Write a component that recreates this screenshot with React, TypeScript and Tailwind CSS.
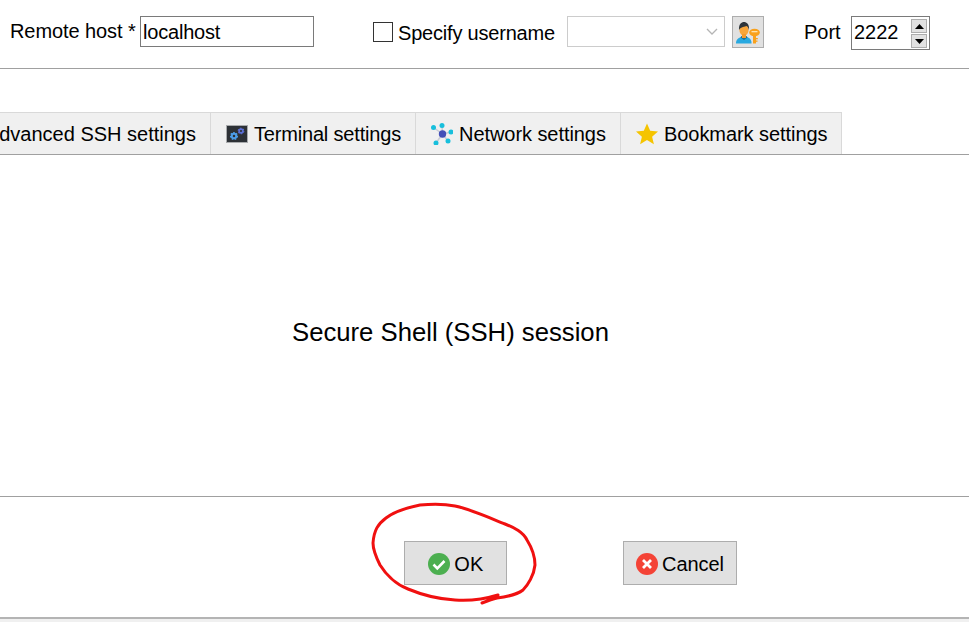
import React from "react";

function UserKey() {
  return (
    <svg width="24" height="22" viewBox="0 0 24 22" className="mt-[1px]">
      <path d="M0 21.500c0-4 2-5.500 5-6.500l3-1 3 1c3 1 4.500 2.500 4.500 6.500z" fill="#29a9e0" />
      <path d="M4.500 15.500L8 18l3.500-2.500-1-1.500h-5z" fill="#1c6f96" />
      <ellipse cx="8" cy="8" rx="4.600" ry="5.800" fill="#f9a63a" />
      <rect x="6" y="12" width="4" height="4" fill="#f49a2c" />
      <path d="M3 8C2.500 2 5.500 0 8 0s5.500 2 5 8c-.5-2.500-1.500-3.500-2.500-4C9 4.800 5 4.500 3 8z" fill="#2e353b" />
      <ellipse cx="18.500" cy="10.500" rx="5.300" ry="3.800" fill="#f9a11b" />
      <rect x="15.500" y="9" width="6" height="1.300" fill="#ffe3ad" />
      <rect x="17" y="13" width="3" height="8.500" fill="#f9a11b" />
      <rect x="20" y="16" width="1.800" height="1.300" fill="#f9a11b" />
      <rect x="20" y="18.500" width="1.500" height="1.300" fill="#f9a11b" />
    </svg>
  );
}

function Gear({ cx, cy, r, color }: { cx: number; cy: number; r: number; color: string }) {
  return (
    <g>
      <circle cx={cx} cy={cy} r={r} fill="none" stroke={color} strokeWidth={r * 0.9} />
      <circle cx={cx} cy={cy} r={r * 1.5} fill="none" stroke={color} strokeWidth={r * 0.55} strokeDasharray="1.600 1.400" />
    </g>
  );
}

function TerminalIcon() {
  return (
    <svg width="22" height="18" viewBox="0 0 22 18" className="shrink-0">
      <rect x="0.500" y="0.500" width="21" height="17" fill="#2d3136" stroke="#a9abad" />
      <Gear cx={8} cy={11} r={2.300} color="#4d9de8" />
      <Gear cx={15} cy={6} r={1.900} color="#5b6fd6" />
    </svg>
  );
}

function NetworkIcon() {
  const nodes = [
    [2.500, 4.500],
    [11, 2.500],
    [20, 9],
    [5, 20],
    [17, 18],
  ];
  return (
    <svg width="22" height="22" viewBox="0 0 22 22" className="shrink-0">
      {nodes.map(([x, y], i) => (
        <line key={i} x1={11.500} y1={11} x2={x} y2={y} stroke="#c9ccd6" strokeWidth="1.500" />
      ))}
      {nodes.map(([x, y], i) => (
        <circle key={i} cx={x} cy={y} r="2.500" fill="#18bfdc" />
      ))}
      <circle cx="11.500" cy="11" r="3.700" fill="#4350b8" />
    </svg>
  );
}

function StarIcon() {
  return (
    <svg width="22" height="22" viewBox="0 0 22 22" className="shrink-0">
      <path d="M11 0.500l3.200 7.300 7.800.7-5.900 5.200 1.800 7.600L11 17.100l-6.900 4.200 1.800-7.600L0 8.500l7.800-.7z" fill="#f5c400" />
    </svg>
  );
}

function Tab({ children, className = "" }: { children: React.ReactNode; className?: string }) {
  return (
    <div className={`flex h-[42px] items-center gap-[6px] border-r border-t border-[#d9d9d9] bg-[#f0f0f0] ${className}`}>
      {children}
    </div>
  );
}

function Spin({ up }: { up?: boolean }) {
  return (
    <div className="flex h-[14px] w-[16px] items-center justify-center border border-[#adadad] bg-[#e1e1e1]">
      <svg width="9" height="5" viewBox="0 0 9 5">
        <path d={up ? "M4.500 0L9 5H0z" : "M0 0h9L4.500 5z"} fill="#000" />
      </svg>
    </div>
  );
}

export default function App() {
  return (
    <div className="relative flex h-[622px] w-[969px] flex-col overflow-hidden bg-white font-['Liberation_Sans',Arial,sans-serif] text-[20px] leading-[24px] text-black">
      <div className="flex h-[69px] shrink-0 items-start border-b border-[#a0a0a0] pl-[10px] pt-[16px]">
        <span className="mt-[3px] w-[130px] shrink-0 tracking-[-0.08px]">Remote host *</span>
        <div className="flex h-[31px] w-[174px] shrink-0 items-center border border-[#7a7a7a] pl-[2px] tracking-[-0.2px]">localhost</div>
        <div className="ml-[59px] mt-[6px] h-[20px] w-[20px] shrink-0 border border-[#333333] bg-white" />
        <span className="ml-[5px] mt-[5px] w-[169px] shrink-0 tracking-[-0.2px]">Specify username</span>
        <div className="flex h-[31px] w-[158px] shrink-0 items-center justify-end border border-[#cccccc] pr-[6px]">
          <svg width="12" height="8" viewBox="0 0 12 8">
            <path d="M1 1l5 5 5-5" fill="none" stroke="#b5b5b5" strokeWidth="1.300" />
          </svg>
        </div>
        <div className="ml-[7px] flex h-[32px] w-[32px] shrink-0 items-center justify-center border border-[#adadad] bg-[#e1e1e1]">
          <UserKey />
        </div>
        <span className="ml-[40px] mt-[4px] w-[47px] shrink-0">Port</span>
        <div className="flex h-[34px] w-[79px] shrink-0 items-center justify-between border border-[#7a7a7a] pl-[2px] pr-[2px] pb-[2px]">
          <span>2222</span>
          <div className="mt-[2px] flex flex-col gap-[1px] self-start">
            <Spin up />
            <Spin />
          </div>
        </div>
      </div>

      <div className="mt-[43px] flex h-[43px] shrink-0 items-stretch border-b border-[#a0a0a0]">
        <Tab className="w-[211px] justify-end pr-[14px]">
          <span className="whitespace-nowrap">Advanced SSH settings</span>
        </Tab>
        <Tab className="w-[205px] pl-[15px]">
          <TerminalIcon />
          <span className="whitespace-nowrap tracking-[-0.18px]">Terminal settings</span>
        </Tab>
        <Tab className="w-[205px] pl-[15px]">
          <NetworkIcon />
          <span className="whitespace-nowrap tracking-[-0.06px]">Network settings</span>
        </Tab>
        <Tab className="w-[221px] pl-[15px]">
          <StarIcon />
          <span className="whitespace-nowrap tracking-[-0.06px]">Bookmark settings</span>
        </Tab>
      </div>

      <div className="flex h-[342px] shrink-0 items-center justify-start border-b border-[#a0a0a0] pl-[292px] pt-[12px]">
        <span className="text-[25.7px] leading-[28px]">Secure Shell (SSH) session</span>
      </div>

      <div className="flex h-[120px] shrink-0 items-start pl-[404px] pt-[44px]">
        <button className="flex h-[44px] w-[103px] items-center justify-center gap-[4px] border border-[#adadad] bg-[#e1e1e1] pl-[1px] pt-[1px]">
          <svg width="22" height="22" viewBox="0 0 22 22" className="shrink-0">
            <circle cx="11" cy="11" r="11" fill="#4caf50" />
            <path d="M5.500 11.500l3.800 3.800L16.500 8" fill="none" stroke="#fff" strokeWidth="2.600" />
          </svg>
          <span className="tracking-[0.4px]">OK</span>
        </button>
        <button className="ml-[116px] flex h-[44px] w-[114px] items-center justify-center gap-[4px] border border-[#adadad] bg-[#e1e1e1] pt-[1px]">
          <svg width="22" height="22" viewBox="0 0 22 22" className="shrink-0">
            <circle cx="11" cy="11" r="11" fill="#f44336" />
            <path d="M7 7l8 8M15 7l-8 8" fill="none" stroke="#fff" strokeWidth="2.800" />
          </svg>
          <span className="tracking-[-0.05px]">Cancel</span>
        </button>
      </div>

      <div className="flex-1 border-t-2 border-[#b4b4b4] bg-[#f0f0f0]" />

      <svg className="pointer-events-none absolute left-0 top-0" width="969" height="622" viewBox="0 0 969 622">
        <path
          d="M498 595C485 599 470 601 455 600C435 599 420 594 408 589C395 584 385 573 380 565C375 555 373 548 373 543C374 530 378 524 386 518C395 511 405 508 420 505C432 504 445 504 455 506C470 509 490 518 505 524C515 528 523 532 527 540C532 548 535 557 535 565C534 575 528 585 523 590C518 594 505 597 497 598C492 599 487 601 482 603"
          fill="none"
          stroke="#f01010"
          strokeWidth="3"
          strokeLinecap="round"
          strokeLinejoin="round"
        />
      </svg>
    </div>
  );
}
